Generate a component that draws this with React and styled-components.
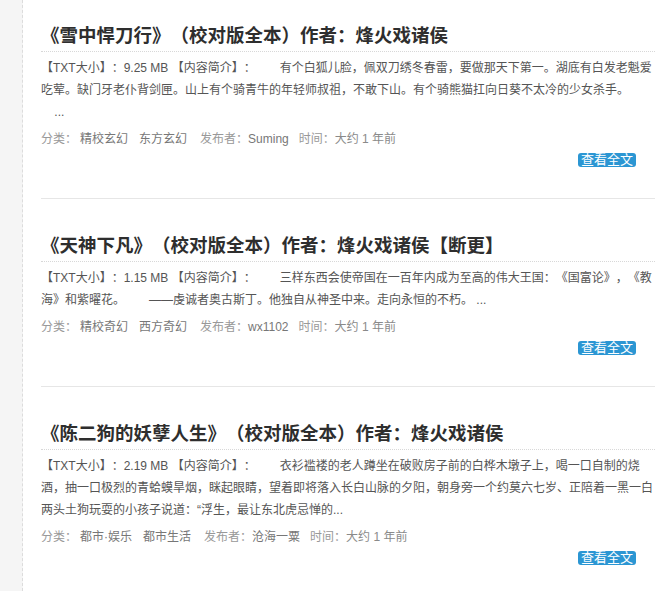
import React from "react";
import styled, { createGlobalStyle } from "styled-components";

const GlobalStyle = createGlobalStyle`
  html, body {
    margin: 0;
    padding: 0;
    background: #ffffff;
  }
  body {
    font-family: "Liberation Sans", "Noto Sans CJK SC", sans-serif;
    overflow: hidden;
    text-spacing-trim: space-all;
  }
`;

const Page = styled.div`
  display: flex;
  min-height: 591px;
  height: 591px;
  overflow: hidden;
`;

const Sidebar = styled.div`
  width: 22px;
  flex: 0 0 22px;
  background: #f5f5f5;
  border-right: 1px dashed #dcdcdc;
`;

const Main = styled.main`
  flex: 1;
  padding: 0 5px 0 18px;
  min-width: 0;
`;

const Item = styled.article`
  padding: 32px 0 31px;
  border-bottom: 1px solid #e6e6e6;
  &:first-child {
    padding-top: 21px;
  }
`;

const Title = styled.h2`
  margin: 0;
  font-family: "Liberation Sans", "Noto Sans CJK SC", sans-serif;
  font-size: 18.5px;
  font-weight: 700;
  line-height: 30px;
  color: #2e2e2e;
  white-space: nowrap;
  text-spacing-trim: space-all;
  border-bottom: 1px dotted #d8d8d8;
`;

const Desc = styled.p`
  margin: 5px 0 0;
  font-size: 12px;
  line-height: 22px;
  color: #555555;
  text-spacing-trim: space-all;
`;

const Meta = styled.div`
  margin-top: 5px;
  display: flex;
  align-items: center;
  font-size: 12px;
  line-height: 22px;
  color: #999999;
  white-space: nowrap;
  text-spacing-trim: space-all;
`;

const MetaGroup = styled.span`
  margin-right: 10px;
`;

const Tag = styled.a`
  color: #777777;
  text-decoration: none;
  margin: 0 8px 0 3px;
  &:last-child {
    margin-right: 3px;
  }
`;

const Value = styled.span`
  color: ${(p) => p.$tone || "#777777"};
`;

const ButtonRow = styled.div`
  margin-top: 3px;
  display: flex;
  justify-content: flex-end;
  padding-right: 19px;
`;

const ReadButton = styled.a`
  display: inline-block;
  background: #2b96d3;
  color: #ffffff;
  font-size: 13px;
  line-height: 14px;
  height: 14px;
  padding: 0 3px;
  border-radius: 3px;
  text-decoration: none;
  overflow: hidden;
`;

const books = [
  {
    title: "《雪中悍刀行》（校对版全本）作者：烽火戏诸侯",
    size: "9.25 MB",
    intro:
      "\u3000\u3000有个白狐儿脸，佩双刀绣冬春雷，要做那天下第一。湖底有白发老魁爱吃荤。缺门牙老仆背剑匣。山上有个骑青牛的年轻师叔祖，不敢下山。有个骑熊猫扛向日葵不太冷的少女杀手。\u3000\u3000\u00a0\u00a0\u00a0\u00a0...",
    tags: ["精校玄幻", "东方玄幻"],
    publisher: "Suming",
  },
  {
    title: "《天神下凡》（校对版全本）作者：烽火戏诸侯【断更】",
    size: "1.15 MB",
    intro:
      "\u3000\u3000三样东西会使帝国在一百年内成为至高的伟大王国：《国富论》，《教海》和紫曜花。\u3000\u3000——虔诚者奥古斯丁。他独自从神圣中来。走向永恒的不朽。 ...",
    tags: ["精校奇幻", "西方奇幻"],
    publisher: "wx1102",
  },
  {
    title: "《陈二狗的妖孽人生》（校对版全本）作者：烽火戏诸侯",
    size: "2.19 MB",
    intro:
      "\u3000\u3000衣衫褴褛的老人蹲坐在破败房子前的白桦木墩子上，喝一口自制的烧酒，抽一口极烈的青蛤蟆旱烟，眯起眼睛，望着即将落入长白山脉的夕阳，朝身旁一个约莫六七岁、正陪着一黑一白两头土狗玩耍的小孩子说道：“浮生，最让东北虎忌惮的...",
    tags: ["都市·娱乐", "都市生活"],
    publisher: "沧海一粟",
  },
];

export default function App() {
  return (
    <>
      <GlobalStyle />
      <Page>
        <Sidebar />
        <Main>
          {books.map((b) => (
            <Item key={b.title}>
              <Title>{b.title}</Title>
              <Desc>
                【TXT大小】：{b.size} 【内容简介】：{b.intro}
              </Desc>
              <Meta>
                <MetaGroup>
                  分类：
                  {b.tags.map((t) => (
                    <Tag key={t} href="#">
                      {t}
                    </Tag>
                  ))}
                </MetaGroup>
                <MetaGroup>
                  发布者：<Value>{b.publisher}</Value>
                </MetaGroup>
                <MetaGroup>
                  时间：<Value $tone="#8a8a8a">大约 1 年前</Value>
                </MetaGroup>
              </Meta>
              <ButtonRow>
                <ReadButton href="#">查看全文</ReadButton>
              </ButtonRow>
            </Item>
          ))}
        </Main>
      </Page>
    </>
  );
}
